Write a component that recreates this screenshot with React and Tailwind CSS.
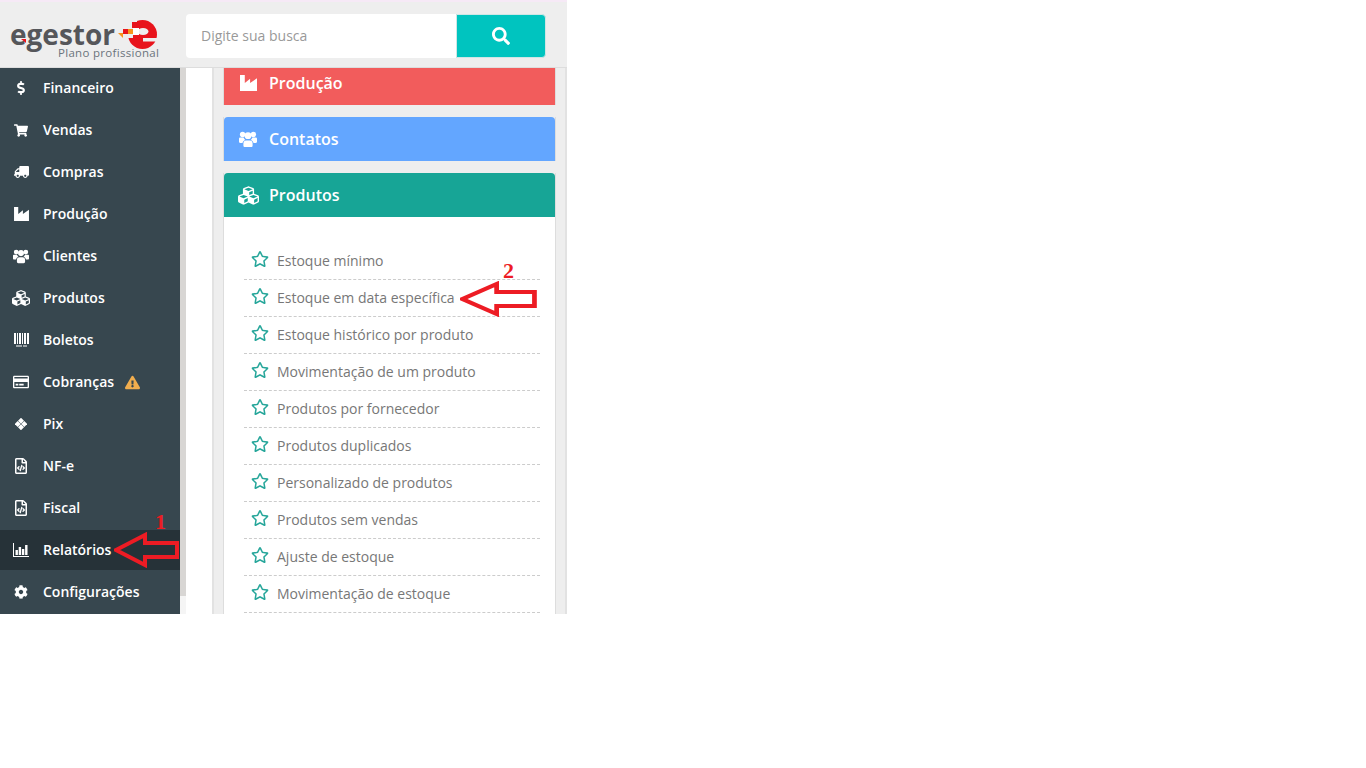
import React from 'react'
import {
  FaDollarSign, FaShoppingCart, FaTruck, FaCubes, FaRegCreditCard,
  FaExclamationTriangle, FaRegFileCode, FaCog, FaSearch, FaRegStar,
} from 'react-icons/fa'

function FactoryIcon({ className }) {
  return (
    <svg viewBox="0 0 16 15" className={`fill-current ${className}`}>
      <path d="M0 0H4.5V7.5L9.5 3.5V7.5L16 3V15H0Z" />
    </svg>
  )
}

function UsersIcon({ className }) {
  return (
    <svg viewBox="0 0 18 16" className={`fill-current ${className}`}>
      <circle cx="3.6" cy="3" r="2.7" />
      <circle cx="14.4" cy="3" r="2.7" />
      <circle cx="9" cy="4.2" r="3.4" />
      <path d="M0 7.2C0 6.4.6 6 1.4 6H4.6C4.9 7 5.5 7.8 6.2 8.4C4.7 8.9 3.8 10 3.5 11.5H1.2C.5 11.5 0 11 0 10.3Z" />
      <path d="M18 7.2C18 6.4 17.4 6 16.6 6H13.4C13.1 7 12.5 7.8 11.8 8.4C13.3 8.9 14.2 10 14.5 11.5H16.8C17.5 11.5 18 11 18 10.3Z" />
      <path d="M4.4 12C4.4 9.9 5.5 8.9 7 8.9H11C12.5 8.9 13.6 9.9 13.6 12V14C13.6 15 13 15.6 12 15.6H6C5 15.6 4.4 15 4.4 14Z" />
    </svg>
  )
}

function BarcodeIcon({ className }) {
  return (
    <svg viewBox="0 0 15 14" className={`fill-current ${className}`}>
      <rect x="0" y="0" width="2" height="11" />
      <rect x="3" y="0" width="1" height="11" />
      <rect x="5" y="0" width="2" height="11" />
      <rect x="8" y="0" width="1" height="11" />
      <rect x="10" y="0" width="2" height="11" />
      <rect x="13" y="0" width="2" height="11" />
      <rect x="2" y="12.5" width="6" height="1" />
      <rect x="9" y="12.5" width="4" height="1" />
    </svg>
  )
}

function ChartIcon({ className }) {
  return (
    <svg viewBox="0 0 16 14" className={`fill-current ${className}`}>
      <rect x="0" y="0" width="1" height="13" />
      <rect x="0" y="13" width="16" height="1" />
      <rect x="2.5" y="7" width="2.4" height="5" />
      <rect x="5.7" y="4" width="2.4" height="8" />
      <rect x="8.9" y="6" width="2.4" height="6" />
      <rect x="12.1" y="2" width="2.4" height="10" />
    </svg>
  )
}

function PixIcon({ className }) {
  return (
    <svg viewBox="0 0 12 12" className={`fill-current ${className}`}>
      <rect x="3.9" y="0.6" width="4.2" height="4.2" transform="rotate(45 6 2.7)" />
      <rect x="3.9" y="7.2" width="4.2" height="4.2" transform="rotate(45 6 9.3)" />
      <rect x="0.6" y="3.9" width="4.2" height="4.2" transform="rotate(45 2.7 6)" />
      <rect x="7.2" y="3.9" width="4.2" height="4.2" transform="rotate(45 9.3 6)" />
    </svg>
  )
}

const menu = [
  { label: 'Financeiro', icon: FaDollarSign, size: 'w-[14px] h-[14px]' },
  { label: 'Vendas', icon: FaShoppingCart, size: 'w-[14px] h-[13px]' },
  { label: 'Compras', icon: FaTruck, size: 'w-[15px] h-[14px] -scale-x-100' },
  { label: 'Produção', icon: FactoryIcon, size: 'w-[15px] h-[14px]' },
  { label: 'Clientes', icon: UsersIcon, size: 'w-[16px] h-[15px]' },
  { label: 'Produtos', icon: FaCubes, size: 'w-[18px] h-[18px]' },
  { label: 'Boletos', icon: BarcodeIcon, size: 'w-[15px] h-[14px]' },
  { label: 'Cobranças', icon: FaRegCreditCard, size: 'w-[16px] h-[16px]', warn: true },
  { label: 'Pix', icon: PixIcon, size: 'w-[12px] h-[12px]' },
  { label: 'NF-e', icon: FaRegFileCode, size: 'w-[16px] h-[16px]' },
  { label: 'Fiscal', icon: FaRegFileCode, size: 'w-[16px] h-[16px]' },
  { label: 'Relatórios', icon: ChartIcon, size: 'w-[16px] h-[14px]', active: true },
  { label: 'Configurações', icon: FaCog, size: 'w-[14px] h-[14px]' },
]

const reports = [
  'Estoque mínimo',
  'Estoque em data específica',
  'Estoque histórico por produto',
  'Movimentação de um produto',
  'Produtos por fornecedor',
  'Produtos duplicados',
  'Personalizado de produtos',
  'Produtos sem vendas',
  'Ajuste de estoque',
  'Movimentação de estoque',
]

function Arrow({ className }) {
  return (
    <svg viewBox="0 0 66 36" preserveAspectRatio="none" className={className}>
      <path d="M2 18 L31 3 L31 11 L63 11 L63 25 L31 25 L31 33 Z" fill="none" stroke="#ed1c24" strokeWidth="4" />
    </svg>
  )
}

function Logo() {
  return (
    <div className="relative w-[150px] h-[44px]">
      <span className="absolute left-0 top-[10px] text-[28px] leading-[20px] font-bold text-[#55565a]">egestor</span>
      <svg viewBox="0 0 45 33" className="absolute left-[105px] top-[4px] w-[45px] h-[33px]">
        <circle cx="27.5" cy="16.5" r="14.5" fill="#e8141c" />
        <rect x="12" y="0" width="10" height="10" fill="#eeeeee" />
        <rect x="11" y="10" width="7" height="10" fill="#eeeeee" />
        <ellipse cx="28" cy="13.5" rx="5.5" ry="3.5" fill="#eeeeee" />
        <rect x="28" y="20" width="15" height="3.5" fill="#eeeeee" />
        <rect x="17" y="4" width="6" height="6" fill="#e8141c" />
        <rect x="18" y="10" width="6" height="7" fill="#ffffff" />
        <rect x="13" y="11" width="5" height="5" fill="#f7941d" />
        <rect x="8" y="11" width="5" height="5" fill="#e8141c" />
        <path d="M3 15 L8 15 L8 20 Z" fill="#f7941d" />
      </svg>
      <svg viewBox="0 0 5 4" className="absolute left-[11px] top-[25px] w-[5px] h-[4px]">
        <path d="M0 0 L5 0 L5 4 Z" fill="#e8141c" />
      </svg>
      <span className="absolute left-[48px] top-[31px] text-[11.5px] leading-4 tracking-[0.3px] text-[#6b747c]">Plano profissional</span>
    </div>
  )
}

function PanelHeader({ icon: Icon, label, iconSize, className }) {
  return (
    <div className={`flex items-center h-11 text-white ${className}`}>
      <div className="w-[45px] pl-[3px] flex justify-center">
        <Icon className={iconSize} />
      </div>
      <span className="text-base font-semibold">{label}</span>
    </div>
  )
}

export default function App() {
  return (
    <div className="w-[567px] h-[614px] overflow-hidden flex flex-col bg-[#eeeeee] font-['Open_Sans',sans-serif]">
      {/* Header */}
      <div className="h-[68px] shrink-0 flex items-start pt-3 border-t-2 border-t-[#f6e9f6] border-b border-b-[#dddddd]">
        <div className="w-[186px] shrink-0 pl-[10px]">
          <Logo />
        </div>
        <div className="flex w-[360px] h-11">
          <div className="w-[270px] bg-white rounded-l flex items-center pl-[15px] text-sm text-[#999999]">Digite sua busca</div>
          <div className="w-[90px] bg-[#00c4bf] rounded-r border border-[#cfe6e5] flex items-center justify-center">
            <FaSearch className="w-[18px] h-[18px] text-white" />
          </div>
        </div>
      </div>

      <div className="flex flex-1 min-h-0">
        {/* Sidebar */}
        <div className="w-[180px] shrink-0 bg-[#37474f] flex flex-col gap-[2px]">
          {menu.map((item) => {
            const Icon = item.icon
            return (
              <div key={item.label} className={`relative flex items-center shrink-0 h-[40px] ${item.active ? 'bg-[#263238]' : ''}`}>
                <div className="w-[43px] shrink-0 flex justify-center pr-[1px]">
                  <Icon className={`text-white ${item.size}`} />
                </div>
                <span className="text-sm font-semibold text-white">{item.label}</span>
                {item.warn && <FaExclamationTriangle className="ml-[11px] w-[15px] h-[15px] text-[#f0ad4e]" />}
                {item.active && (
                  <>
                    <span className="absolute left-[155px] top-[-20px] text-[22px] leading-6 font-bold text-[#ed1c24] font-['Liberation_Serif',serif]">1</span>
                    <Arrow className="absolute left-[114px] top-[2px] w-[66px] h-[36px]" />
                  </>
                )}
              </div>
            )
          })}
        </div>

        {/* Scrollbar and gutter */}
        <div className="w-[6px] shrink-0 bg-[#f5f5f5]">
          <div className="h-[528px] bg-[#d8d6d4]" />
        </div>
        <div className="w-[26px] shrink-0 bg-white" />

        {/* Content */}
        <div className="flex-1 min-w-0 overflow-hidden border-x-2 border-x-[#e2e2e2] pl-[9px] pr-[9px]">
          <div className="border-x border-x-[#dddddd] -mt-[7px] flex flex-col">
            <PanelHeader icon={FactoryIcon} iconSize="w-[17px] h-[16px]" label="Produção" className="bg-[#f25c5c]" />
            <div className="h-3 bg-[#eeeeee] -mx-px" />
            <PanelHeader icon={UsersIcon} iconSize="w-[18px] h-[17px]" label="Contatos" className="rounded-t bg-[#63a6ff]" />
            <div className="h-3 bg-[#eeeeee] -mx-px" />
            <PanelHeader icon={FaCubes} iconSize="w-[21px] h-[21px]" label="Produtos" className="rounded-t bg-[#17a596]" />
            <div className="bg-white pl-5 pr-[15px] pt-[26px] pb-5">
              {reports.map((name, i) => (
                <div key={name} className="relative flex items-center h-[37px] border-b border-dashed border-b-[#cccccc]">
                  <FaRegStar className="ml-[7px] w-[18px] h-[18px] text-[#26a69a] -mt-[5px]" />
                  <span className="ml-[8px] text-sm text-[#777777]">{name}</span>
                  {i === 1 && (
                    <>
                      <span className="absolute left-[259px] top-[-21px] text-[22px] leading-6 font-bold text-[#ed1c24] font-['Liberation_Serif',serif]">2</span>
                      <Arrow className="absolute left-[216px] top-[1px] w-[78px] h-[36px]" />
                    </>
                  )}
                </div>
              ))}
            </div>
          </div>
        </div>
      </div>
    </div>
  )
}
